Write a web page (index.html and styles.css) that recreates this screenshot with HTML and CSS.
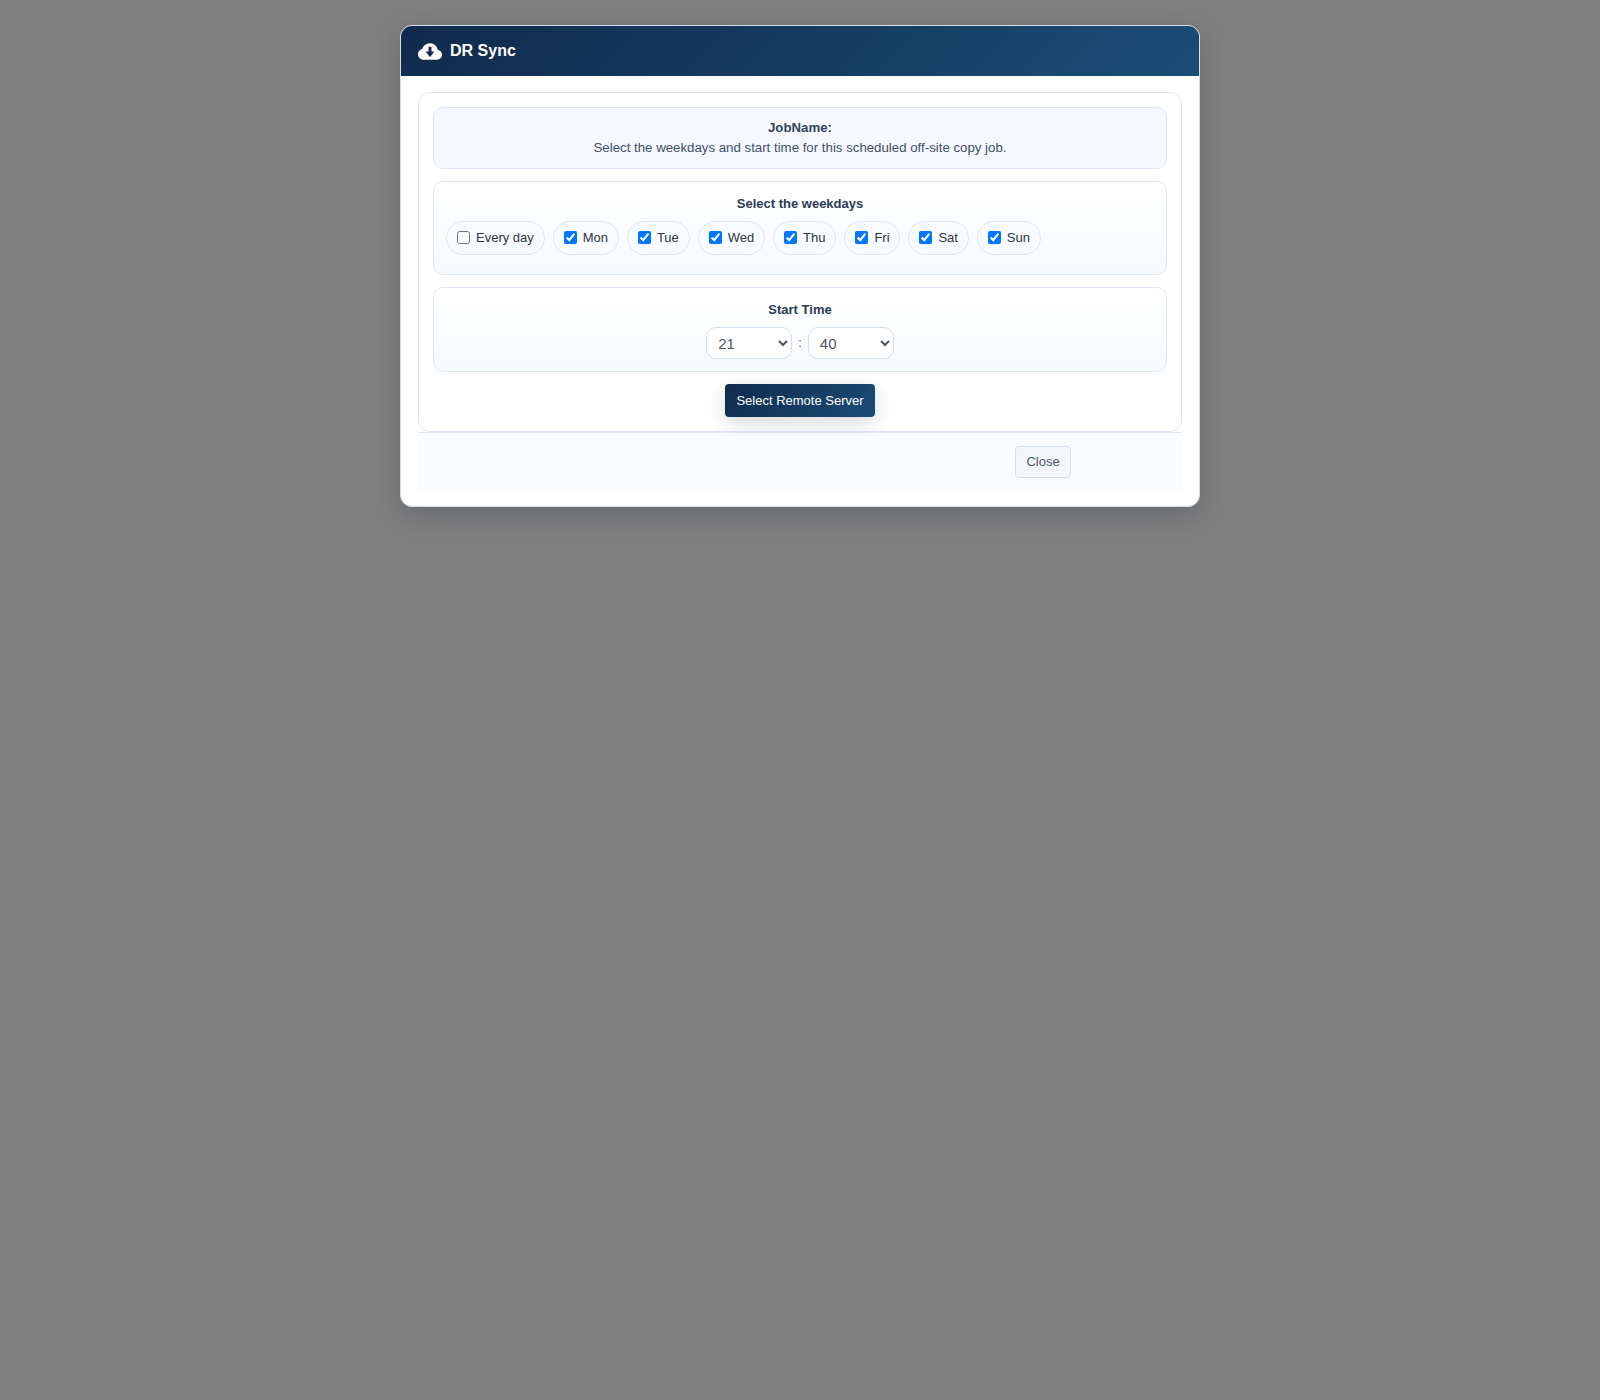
FILE: index.html
```html
<!DOCTYPE html>
<html lang="en">
<head>
    <meta charset="UTF-8">
    <meta name="viewport" content="width=device-width, initial-scale=1.0">
    <title>DR Sync</title>

    <link rel="stylesheet" href="styles.css">
</head>
<body>
    <div class="modal">
        <div class="modal-header">
            <svg class="cloud" viewBox="0 1.2 16 12.667"><path fill="#fff" fill-rule="evenodd" d="M8 2a5.53 5.53 0 0 0-3.594 1.342c-.766.66-1.321 1.52-1.464 2.383C1.266 6.095 0 7.555 0 9.318 0 11.366 1.708 13 3.781 13h8.906C14.502 13 16 11.57 16 9.773c0-1.636-1.242-2.969-2.834-3.194C12.923 3.999 10.69 2 8 2zM7 4.3h2v3.2h1.9L8 11.3 5.1 7.5H7z"/></svg>
            <span class="modal-title">DR Sync</span>
        </div>

        <div class="modal-body">
            <div class="panel">
                <div class="job-info">
                    <div class="job-name">JobName:</div>
                    <div>Select the weekdays and start time for this scheduled off-site copy job.</div>
                </div>

                <div class="section">
                    <div class="section-title">Select the weekdays</div>
                    <div class="days">
                        <label class="day"><input type="checkbox">Every day</label>
                        <label class="day"><input type="checkbox" checked>Mon</label>
                        <label class="day"><input type="checkbox" checked>Tue</label>
                        <label class="day"><input type="checkbox" checked>Wed</label>
                        <label class="day"><input type="checkbox" checked>Thu</label>
                        <label class="day"><input type="checkbox" checked>Fri</label>
                        <label class="day"><input type="checkbox" checked>Sat</label>
                        <label class="day"><input type="checkbox" checked>Sun</label>
                    </div>
                </div>

                <div class="section">
                    <div class="section-title">Start Time</div>
                    <div class="time">
                        <select><option>21</option></select>
                        <span class="colon">:</span>
                        <select><option>40</option></select>
                    </div>
                </div>

                <div class="actions">
                    <button type="button" class="btn-primary">Select Remote Server</button>
                </div>
            </div>

            <div class="modal-footer">
                <button type="button" class="btn-close">Close</button>
            </div>
        </div>
    </div>
</body>
</html>
```

FILE: styles.css
```css
html,body{
    margin: 0;
    padding: 0;
    height: 100%;
}
body{
    min-height: 1400px;
    background-color: #808080;
    font-family: "Liberation Sans", Arial, sans-serif;
    font-size: 13px;
    line-height: 20px;
    color: #3d4f68;
}
.modal{
    box-sizing: border-box;
    width: 800px;
    height: 482px;
    margin: 25px auto 0;
    background-color: #fff;
    border: 1px solid #d4dde8;
    border-radius: 12px;
    overflow: hidden;
    box-shadow: 0 8px 30px rgba(15, 23, 42, 0.22);
}
.modal-header{
    display: flex;
    align-items: center;
    gap: 8px;
    height: 50px;
    padding: 0 17px;
    background: linear-gradient(135deg, #102a4c, #1a4d78);
    color: #fff;
}
.cloud{
    width: 24px;
    height: 19px;
}
.modal-title{
    font-size: 16px;
    font-weight: bold;
}
.modal-body{
    padding: 16px 17px 14px;
}
.panel{
    display: flex;
    flex-direction: column;
    gap: 12px;
    padding: 14px;
    background-color: #fff;
    border: 1px solid #dde6f2;
    border-radius: 12px;
}
.job-info{
    padding: 10px;
    font-size: 13.25px;
    text-align: center;
    background-color: #f5f9ff;
    border: 1px solid #dde6f2;
    border-radius: 10px;
}
.job-name{
    font-weight: bold;
    color: #33445c;
}
.section{
    padding: 12px;
    background: linear-gradient(180deg, #fff, #f7faff);
    border: 1px solid #dde6f2;
    border-radius: 10px;
}
.section-title{
    margin-bottom: 8px;
    line-height: 19px;
    font-weight: bold;
    text-align: center;
    color: #2b3a52;
}
.days{
    display: flex;
    gap: 8px;
    margin-bottom: 7px;
}
.day{
    display: flex;
    align-items: center;
    gap: 6px;
    box-sizing: border-box;
    height: 34px;
    padding: 0 9.9px 0 10px;
    background-color: #f8fbff;
    border: 1px solid #dde6f2;
    border-radius: 17px;
    color: #2d3540;
}
.day input{
    width: 13px;
    height: 13px;
    margin: 0 0 1px;
}
.time{
    display: flex;
    justify-content: center;
    align-items: center;
    gap: 6px;
}
.time select{
    box-sizing: border-box;
    width: 86px;
    height: 32px;
    padding: 0 7px;
    background-color: #fff;
    border: 1px solid #d5e0ee;
    border-radius: 10px;
    font-family: "Liberation Sans", Arial, sans-serif;
    font-size: 15px;
    color: #50565e;
}
.colon{
    color: #475569;
}
.actions{
    display: flex;
    justify-content: center;
}
.btn-primary{
    box-sizing: border-box;
    width: 150px;
    height: 33px;
    padding: 0;
    background: linear-gradient(135deg, #102a4c, #1a4d78);
    border: none;
    border-radius: 4px;
    box-shadow: 0 6px 18px rgba(15, 23, 42, 0.16);
    font-family: "Liberation Sans", Arial, sans-serif;
    font-size: 13px;
    color: #fff;
}
.modal-footer{
    display: flex;
    justify-content: flex-end;
    box-sizing: border-box;
    height: 60px;
    padding: 13px 111px 0 0;
    background-color: #fbfcfe;
    border-top: 1px solid #e3eaf4;
}
.btn-close{
    box-sizing: border-box;
    width: 56px;
    height: 32px;
    padding: 0 0 1px;
    background-color: #f4f7fa;
    border: 1px solid #d5e0ee;
    border-radius: 4px;
    font-family: "Liberation Sans", Arial, sans-serif;
    font-size: 13px;
    color: #475569;
}
```
